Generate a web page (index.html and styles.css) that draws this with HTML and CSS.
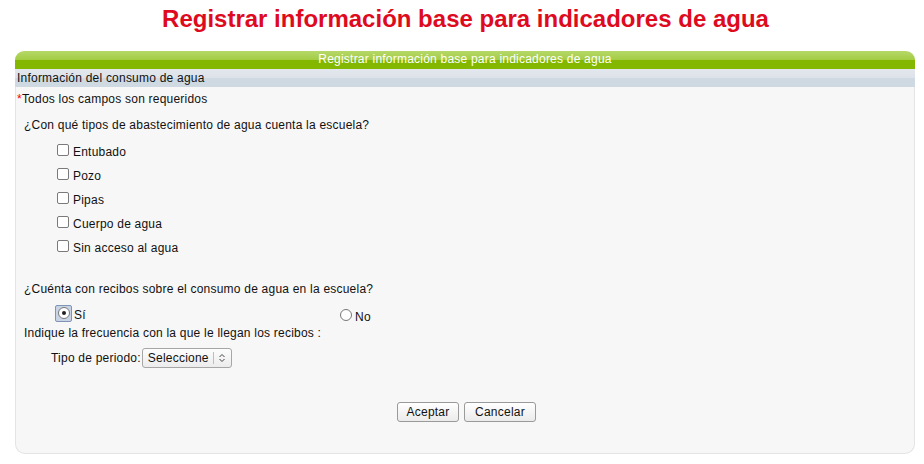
FILE: index.html
```html
<!DOCTYPE html>
<html lang="es">
<head>
<meta charset="utf-8">
<title>Registrar información base para indicadores de agua</title>
<link rel="stylesheet" href="styles.css">
</head>
<body>
<h1 class="page-title">Registrar información base para indicadores de agua</h1>
<div class="panel">
  <div class="panel-head">Registrar información base para indicadores de agua</div>
  <div class="panel-sub">Información del consumo de agua</div>
  <div class="panel-body">
    <div class="req"><span class="star">*</span>Todos los campos son requeridos</div>
    <div class="question">¿Con qué tipos de abastecimiento de agua cuenta la escuela?</div>
    <ul class="checks">
      <li><span class="cb"></span>Entubado</li>
      <li><span class="cb"></span>Pozo</li>
      <li><span class="cb"></span>Pipas</li>
      <li><span class="cb"></span>Cuerpo de agua</li>
      <li><span class="cb"></span>Sin acceso al agua</li>
    </ul>
    <div class="question q2">¿Cuénta con recibos sobre el consumo de agua en la escuela?</div>
    <div class="radios">
      <div class="radio-opt si"><span class="focus"><span class="rb on"></span></span>Sí</div>
      <div class="radio-opt no"><span class="rb"></span>No</div>
    </div>
    <div class="question q3">Indique la frecuencia con la que le llegan los recibos :</div>
    <div class="period">Tipo de periodo:<span class="select"><span class="sel-text">Seleccione</span><span class="sel-arrow"><svg width="8" height="10" viewBox="0 0 8 10"><path d="M1.5 4 L4 1.5 L6.5 4 M1.5 6 L4 8.5 L6.5 6" fill="none" stroke="#444" stroke-width="1"/></svg></span></span></div>
    <div class="actions">
      <button class="btn">Aceptar</button>
      <button class="btn">Cancelar</button>
    </div>
  </div>
</div>
</body>
</html>
```
FILE: styles.css
```css
html, body {
  margin: 0;
  padding: 0;
  background: #ffffff;
}
body {
  font-family: "Liberation Sans", Arial, sans-serif;
  font-size: 12px;
  letter-spacing: 0.22px;
  color: #111;
}
.page-title {
  margin: 0;
  padding: 5px 0 0 7px;
  height: 47px;
  box-sizing: border-box;
  text-align: center;
  font-size: 24px;
  letter-spacing: 0;
  font-weight: bold;
  color: #de0a1e;
  line-height: 28px;
}
.panel {
  margin: 4px 9px 0 15px;
  width: 900px;
}
.panel-head {
  height: 18px;
  line-height: 17px;
  border-radius: 9px 9px 0 0;
  background: linear-gradient(#b6d86a 0, #a3cc43 50%, #84b800 50%, #84b800 100%);
  color: #fff;
  text-align: center;
  font-size: 12px;
}
.panel-sub {
  height: 18px;
  line-height: 18px;
  padding-left: 2px;
  background: linear-gradient(#e3e7ee 0, #dde2ea 50%, #cfd9e1 50%, #cfd9e1 100%);
  color: #111;
}
.panel-body {
  background: #f7f7f7;
  border: 1px solid #e4e4e4;
  border-top: none;
  border-radius: 0 0 10px 10px;
  height: 367px;
  box-sizing: border-box;
  padding-top: 4px;
}
.req {
  line-height: 16px;
  padding-left: 1px;
}
.star {
  color: #ff0000;
}
.question {
  margin-top: 10px;
  padding-left: 8px;
  line-height: 16px;
}
.checks {
  list-style: none;
  margin: 7px 0 0 0;
  padding: 0 0 0 41px;
}
.checks li {
  height: 24px;
  display: flex;
  align-items: center;
}
.cb {
  display: inline-block;
  width: 10px;
  height: 10px;
  border: 1px solid #7a7a7a;
  border-radius: 2px;
  background: #fff;
  margin-right: 4px;
  position: relative;
  top: -2px;
}
.q2 {
  margin-top: 21px;
}
.radios {
  display: flex;
  align-items: center;
  height: 20px;
  margin-top: 8px;
}
.radio-opt {
  display: flex;
  align-items: center;
}
.radio-opt.si {
  margin-left: 39px;
  width: 285px;
}
.radio-opt.no {
  position: relative;
  top: 2px;
}
.focus {
  display: inline-flex;
  align-items: center;
  justify-content: center;
  width: 15px;
  height: 15px;
  border: 1px solid #7f95b4;
  border-radius: 2px;
  background: #c8d4e6;
  margin-right: 2px;
  position: relative;
  top: -2px;
}
.rb {
  display: inline-block;
  width: 10px;
  height: 10px;
  border: 1px solid #777;
  border-radius: 50%;
  background: #fff;
  position: relative;
  margin-right: 3px;
  top: -2px;
}
.focus .rb {
  margin-right: 0;
  top: 0;
}
.rb.on::after {
  content: "";
  position: absolute;
  left: 3px;
  top: 3px;
  width: 4px;
  height: 4px;
  border-radius: 50%;
  background: #222;
}
.q3 {
  margin-top: 0;
}
.period {
  margin-top: 7px;
  padding-left: 35px;
  display: flex;
  align-items: center;
  height: 20px;
}
.select {
  display: inline-flex;
  align-items: center;
  height: 18px;
  width: 88px;
  margin-left: 1px;
  border: 1px solid #a6a6a6;
  border-radius: 3px;
  background: linear-gradient(#fdfdfd, #ececec);
  box-sizing: content-box;
}
.sel-text {
  padding-left: 5px;
  flex: 1;
}
.sel-arrow {
  display: flex;
  align-items: center;
  justify-content: center;
  width: 17px;
  height: 12px;
  border-left: 1px solid #bdbdbd;
}
.actions {
  margin-top: 34px;
  display: flex;
  justify-content: center;
  gap: 5px;
  padding-left: 3px;
}
.btn {
  font-family: "Liberation Sans", Arial, sans-serif;
  font-size: 12px;
  letter-spacing: 0.22px;
  color: #111;
  height: 20px;
  width: 62px;
  padding: 0;
  border: 1px solid #9a9a9a;
  border-radius: 3px;
  background: linear-gradient(#ffffff, #ebebeb);
  line-height: 16px;
}
.btn + .btn {
  width: 72px;
}
```
